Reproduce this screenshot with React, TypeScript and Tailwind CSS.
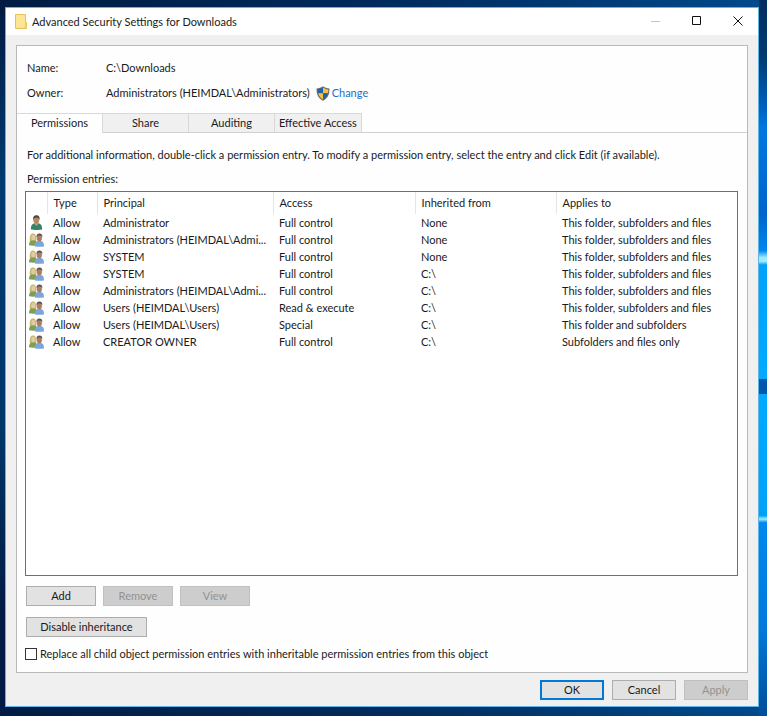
import { useState } from 'react'

type Entry = {
  icon: 'user' | 'group'
  principal: string
  access: string
  inherited: string
  appliesTo: string
}

const ENTRIES: Entry[] = [
  { icon: 'user',  principal: 'Administrator',                          access: 'Full control',   inherited: 'None', appliesTo: 'This folder, subfolders and files' },
  { icon: 'group', principal: 'Administrators (HEIMDAL\\Admi...', access: 'Full control',   inherited: 'None', appliesTo: 'This folder, subfolders and files' },
  { icon: 'group', principal: 'SYSTEM',                                 access: 'Full control',   inherited: 'None', appliesTo: 'This folder, subfolders and files' },
  { icon: 'group', principal: 'SYSTEM',                                 access: 'Full control',   inherited: 'C:\\', appliesTo: 'This folder, subfolders and files' },
  { icon: 'group', principal: 'Administrators (HEIMDAL\\Admi...', access: 'Full control',   inherited: 'C:\\', appliesTo: 'This folder, subfolders and files' },
  { icon: 'group', principal: 'Users (HEIMDAL\\Users)',                 access: 'Read & execute', inherited: 'C:\\', appliesTo: 'This folder, subfolders and files' },
  { icon: 'group', principal: 'Users (HEIMDAL\\Users)',                 access: 'Special',        inherited: 'C:\\', appliesTo: 'This folder and subfolders' },
  { icon: 'group', principal: 'CREATOR OWNER',                          access: 'Full control',   inherited: 'C:\\', appliesTo: 'Subfolders and files only' },
]

const TABS = ['Permissions', 'Share', 'Auditing', 'Effective Access']

function FolderIcon() {
  return (
    <svg viewBox="0 0 12 15" className="h-[15px] w-3" aria-hidden="true">
      <path d="M.5.5h10v8h1v6H.5z" fill="#fbe08a" stroke="#e6c25c" />
      <path d="M1 1h9v12H1z" fill="#fde596" />
      <path d="M10 9h1.500v5H9.500z" fill="#f3cf66" />
    </svg>
  )
}

function ShieldIcon() {
  return (
    <svg viewBox="0 0 14 15" className="h-[15px] w-3.5" aria-hidden="true">
      <path d="M7 .3C5 1.800 3 2.300.6 2.400.4 8 2 12 7 14.700 12 12 13.600 8 13.400 2.400 11 2.300 9 1.800 7 .3z" fill="#66696c" />
      <path d="M7 1.600C5.300 2.800 3.600 3.300 1.700 3.400c0 1.500.1 2.700.4 3.900H7z" fill="#1c63b4" />
      <path d="M7 1.600c1.700 1.200 3.400 1.700 5.300 1.800 0 1.500-.1 2.700-.4 3.900H7z" fill="#f8bf3c" />
      <path d="M2.100 7.300C2.800 10 4.300 12 7 13.500V7.300z" fill="#f8bf3c" />
      <path d="M11.900 7.300C11.200 10 9.700 12 7 13.500V7.300z" fill="#1c63b4" />
    </svg>
  )
}

function UserIcon() {
  return (
    <svg viewBox="0 0 15 15" className="h-[15px] w-[15px]" aria-hidden="true">
      <path d="M1.800 14.500c0-4 1.200-5.800 3.700-6.300h4c2.500.5 3.700 2.300 3.700 6.300-3 .6-8.400.6-11.400 0z" fill="#34836a" />
      <path d="M5.500 7.500h3.600l.4 1.200-2 2.300-2.300-2.300z" fill="#c99b78" />
      <ellipse cx="7.300" cy="4.600" rx="3" ry="3.900" fill="#b98763" />
      <path d="M4.200 5C3.600 2 5 .2 7.400.2S11.200 2 10.400 5c-.3-1.600-.8-2.200-1.900-2.300-1.500 0-3.600-.3-4.300 2.300z" fill="#54483d" />
    </svg>
  )
}

function GroupIcon() {
  return (
    <svg viewBox="0 0 15 14" className="h-3.5 w-[15px]" aria-hidden="true">
      <path d="M.8 8C.4 3 1.400.4 4 .4S7.600 3 7.200 8z" fill="#c7b571" />
      <path d="M0 12.300C0 9.300.8 7.700 2.600 7.400h3c1.800.4 2.900 1.900 2.900 4.900-2.300.6-6.200.6-8.500 0z" fill="#7c9f52" />
      <ellipse cx="4.300" cy="4.500" rx="2" ry="2.800" fill="#e3cba0" />
      <path d="M5.800 13.400c0-3.600 1-5 3-5.400h3.100c2.100.4 3.100 1.800 3.100 5.400-2.600.5-6.600.5-9.200 0z" fill="#7ba5dc" />
      <ellipse cx="10.300" cy="4.900" rx="2.600" ry="3.400" fill="#ab7c5d" />
      <path d="M7.500 4.500C7.200 1.600 8.300.4 10.400.4s3.300 1.200 2.900 4.100c-.4-1.300-1-2-2.200-2-1.300 0-2.800-.2-3.600 2z" fill="#5c524d" />
    </svg>
  )
}

function DialogButton({ children, className, ...rest }: React.ComponentProps<'button'>) {
  return (
    <button
      type="button"
      className={`h-5 border border-[#adadad] bg-[#e2e2e2] text-center leading-4 disabled:border-[#c0c0c0] disabled:bg-[#cdcdcd] disabled:text-[#929292] ${className}`}
      {...rest}
    >
      {children}
    </button>
  )
}

function TitleBar() {
  return (
    <header className="flex h-[27px] shrink-0 items-center justify-between bg-white pl-[9px] pr-3.5">
      <div className="flex items-center gap-[5px]">
        <FolderIcon />
        <h1>Advanced Security Settings for Downloads</h1>
      </div>
      <div className="flex items-center gap-[29px] pb-0.5">
        <button type="button" aria-label="Minimize" disabled>
          <svg viewBox="0 0 12 12" className="h-3 w-3"><path d="M1 6.500h9" stroke="#c4c4c4" /></svg>
        </button>
        <button type="button" aria-label="Maximize">
          <svg viewBox="0 0 12 12" className="h-3 w-3"><path d="M1.500 1.500h8v8h-8z" fill="none" stroke="#111" /></svg>
        </button>
        <button type="button" aria-label="Close">
          <svg viewBox="0 0 12 12" className="h-3 w-3"><path d="M1.500 1.500l9 9M10.500 1.500l-9 9" stroke="#111" /></svg>
        </button>
      </div>
    </header>
  )
}

function EntriesTable() {
  return (
    <div className="flex-1 border border-[#6f6f6f] bg-white">
      <table className="w-full table-fixed text-left">
        <colgroup>
          <col className="w-[21px]" />
          <col className="w-[50px]" />
          <col className="w-[176px]" />
          <col className="w-[142px]" />
          <col className="w-[141px]" />
          <col />
        </colgroup>
        <thead>
          <tr className="h-[22px]">
            <th className="border-r border-[#e5e5e5]" aria-label="Icon" />
            {['Type', 'Principal', 'Access', 'Inherited from', 'Applies to'].map((h) => (
              <th key={h} className="border-r border-[#e5e5e5] pl-1.5 font-normal last:border-r-0">{h}</th>
            ))}
          </tr>
        </thead>
        <tbody>
          {ENTRIES.map((e, i) => (
            <tr key={i} className="h-[17px] whitespace-nowrap">
              <td className="pl-[3px]">{e.icon === 'user' ? <UserIcon /> : <GroupIcon />}</td>
              <td className="pl-1.5">Allow</td>
              <td className="pl-1.5">{e.principal}</td>
              <td className="pl-1.5">{e.access}</td>
              <td className="pl-1.5">{e.inherited}</td>
              <td className="pl-1.5">{e.appliesTo}</td>
            </tr>
          ))}
        </tbody>
      </table>
    </div>
  )
}

export default function App() {
  const [tab, setTab] = useState('Permissions')
  const [replaceAll, setReplaceAll] = useState(false)

  return (
    <div className="flex min-h-screen bg-[linear-gradient(90deg,#001c44,#002b5c_50%,#004a8c)] font-['Lato','Open_Sans',sans-serif] text-[11px] leading-4 text-[#1a1a1a]">
      {/* left edge of the wallpaper */}
      <div className="w-[5px] shrink-0 bg-[linear-gradient(#001a40,#003a70_25%,#003668_60%,#001c46_85%)]" />

      <div className="flex min-w-0 flex-1 flex-col pb-[9px] pt-[7px]">
        <main className="flex flex-1 flex-col border border-[#5fb4e8] bg-[#f0f0f0]">
          <TitleBar />

          <div className="flex flex-1 flex-col px-[10px] pb-1.5 pt-[10px]">
            <section className="flex flex-1 flex-col border border-[#b9b9b9] bg-[#fefefe]">
              <dl className="grid grid-cols-[79px_1fr] gap-y-[9px] px-[10px] pb-3 pt-3.5">
                <dt>Name:</dt>
                <dd>C:\Downloads</dd>
                <dt>Owner:</dt>
                <dd className="flex items-center">
                  Administrators (HEIMDAL\Administrators)
                  <a href="#change" className="ml-1.5 flex items-center gap-0.5 text-[#1b6fc9]">
                    <ShieldIcon />
                    Change
                  </a>
                </dd>
              </dl>

              <div role="tablist" className="flex h-5 border-b border-[#d0d0d0]">
                {TABS.map((t) => (
                  <button
                    key={t}
                    type="button"
                    role="tab"
                    aria-selected={tab === t}
                    onClick={() => setTab(t)}
                    className="min-w-[86px] whitespace-nowrap border-r border-t border-[#d9d9d9] bg-[#f0f0f0] px-1 aria-selected:-mb-px aria-selected:bg-[#fefefe] aria-selected:pb-px"
                  >
                    {t}
                  </button>
                ))}
              </div>

              <div className="flex flex-1 flex-col pb-[10px] pl-2 pr-[9px] pt-3.5">
                <p className="px-0.5">
                  For additional information, double-click a permission entry. To modify a permission entry, select the entry and click Edit (if available).
                </p>
                <p className="mb-1 mt-2 px-0.5">Permission entries:</p>

                <EntriesTable />

                <div className="mt-[10px] flex gap-[7px] px-px">
                  <DialogButton className="w-[70px]">Add</DialogButton>
                  <DialogButton className="w-[70px]" disabled>Remove</DialogButton>
                  <DialogButton className="w-[70px]" disabled>View</DialogButton>
                </div>
                <div className="mt-[11px] px-px">
                  <DialogButton className="w-[121px]">Disable inheritance</DialogButton>
                </div>
                <label className="mt-[9px] flex items-center gap-[3px]">
                  <input
                    type="checkbox"
                    checked={replaceAll}
                    onChange={(e) => setReplaceAll(e.target.checked)}
                    className="h-3 w-3 appearance-none border border-[#333] bg-white checked:bg-[#0078d7]"
                  />
                  Replace all child object permission entries with inheritable permission entries from this object
                </label>
              </div>
            </section>

            <footer className="mt-[7px] flex justify-end gap-2">
              <DialogButton className="w-16 outline-2 -outline-offset-2 outline-[#0078d7]">OK</DialogButton>
              <DialogButton className="w-16">Cancel</DialogButton>
              <DialogButton className="w-16" disabled>Apply</DialogButton>
            </footer>
          </div>
        </main>
      </div>

      {/* lit side of the wallpaper, with the window bar crossing it */}
      <div className="w-2 shrink-0 bg-[linear-gradient(#002e5e,#003a70_8%,#0060c0_15%,#0078e0_18%,#0064cc_30%,#0088ee_35%,#a0ecff_36%,#a0ecff_36.5%,#00a2f8_37%,#00aaff_53%,#0058ac_53%,#0058ac_55%,#00aaff_55%,#00a2f8_72%,#a0ecff_72.5%,#0088ee_73%,#0078dc_88%,#004e98)]" />
    </div>
  )
}
